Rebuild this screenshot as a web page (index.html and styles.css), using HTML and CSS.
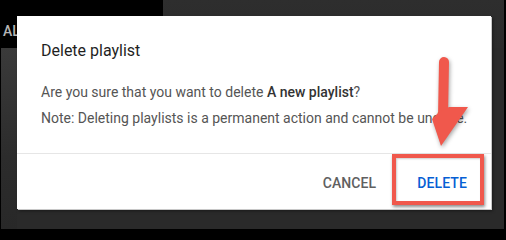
FILE: index.html
```html
<!DOCTYPE html>
<html>
<head>
<meta charset="utf-8">
<link rel="stylesheet" href="styles.css">
</head>
<body>
<div class="frame">
  <div class="topbar">
    <div class="brand"><span class="brand-text">ALL</span></div>
    <div class="topbar-rest"></div>
  </div>
  <div class="content">
    <div class="side"></div>
    <div class="main"></div>
  </div>

  <div class="dialog">
    <h2 class="dialog-title">Delete playlist</h2>
    <div class="dialog-body">
      <p class="msg">Are you sure that you want to delete <b>A new playlist</b>?</p>
      <p class="msg">Note: Deleting playlists is a permanent action and cannot be undone.</p>
    </div>
    <div class="dialog-actions">
      <button class="btn btn-cancel">CANCEL</button>
      <button class="btn btn-delete">DELETE</button>
    </div>
  </div>

  <div class="highlight"></div>
  <svg class="arrow" width="56" height="100" viewBox="0 0 56 100">
    <line x1="28" y1="7" x2="27" y2="62" stroke="#f0584c" stroke-width="10" stroke-linecap="round"/>
    <polygon points="22,58 16,64 25,91 52,52 33,52" fill="#f0584c"/>
  </svg>
</div>
</body>
</html>
```

FILE: styles.css
```css
* { box-sizing: border-box; }
html, body { margin: 0; padding: 0; }
body {
  width: 506px;
  height: 230px;
  overflow: hidden;
  font-family: Roboto, "Liberation Sans", Arial, sans-serif;
  background: #000;
}
.frame {
  position: relative;
  width: 506px;
  height: 230px;
  border: 1px solid #000;
  border-top: 0;
  border-right-width: 2px;
  background: #2a2a2a;
  display: flex;
  flex-direction: column;
}
.topbar {
  display: flex;
  height: 48px;
  flex: none;
}
.brand {
  width: 162px;
  background: #000;
  padding: 21px 0 0 2px;
}
.brand-text {
  color: #b5b5b5;
  font-size: 14px;
  font-weight: 500;
  line-height: 16px;
}
.topbar-rest {
  flex: 1;
  background: linear-gradient(#2e2e2e, #2b2b2b);
}
.content {
  flex: 1;
  display: flex;
}
.side {
  width: 16px;
  background: linear-gradient(#3a3a3a, #2c2c2c 60%, #282828);
}
.main {
  flex: 1;
  background: #2a2a2a;
}

.dialog {
  position: absolute;
  left: 16px;
  top: 16px;
  width: 474px;
  height: 193px;
  background: #fff;
  box-shadow: 1px 1px 0 #c8c8c8, 2px 2px 3px rgba(0,0,0,.4);
  display: flex;
  flex-direction: column;
}
.dialog-title {
  margin: 0;
  padding: 23px 24px 0 24px;
  font-size: 16px;
  font-weight: 400;
  line-height: 24px;
  color: #1f1f1f;
}
.dialog-body {
  padding: 19px 24px 0 24px;
  flex: 1;
  border-bottom: 1px solid #e6e6e6;
}
.msg {
  margin: 0 0 6px 0;
  font-size: 14px;
  line-height: 20px;
  color: #555;
  white-space: nowrap;
}
.msg b { font-weight: 500; color: #333; }
.dialog-actions {
  height: 55px;
  flex: none;
  display: flex;
  justify-content: flex-end;
  align-items: center;
  gap: 9px;
  padding: 3px 8px 0 0;
}
.btn {
  border: 0;
  background: none;
  font-family: Roboto, "Liberation Sans", Arial, sans-serif;
  font-size: 14px;
  font-weight: 500;
  line-height: 20px;
  padding: 8px 16px;
  letter-spacing: 0.1px;
}
.btn-cancel { color: #606060; }
.btn-delete { color: #065fd4; }

.highlight {
  position: absolute;
  left: 391px;
  top: 154px;
  width: 92px;
  height: 51px;
  border: 4px solid #f0584c;
  box-shadow: 1px 2px 3px rgba(0,0,0,.45), inset 1px 1px 2px rgba(0,0,0,.2);
}
.arrow {
  position: absolute;
  left: 415px;
  top: 55px;
  filter: drop-shadow(1px 2px 2px rgba(0,0,0,.35));
}
```
